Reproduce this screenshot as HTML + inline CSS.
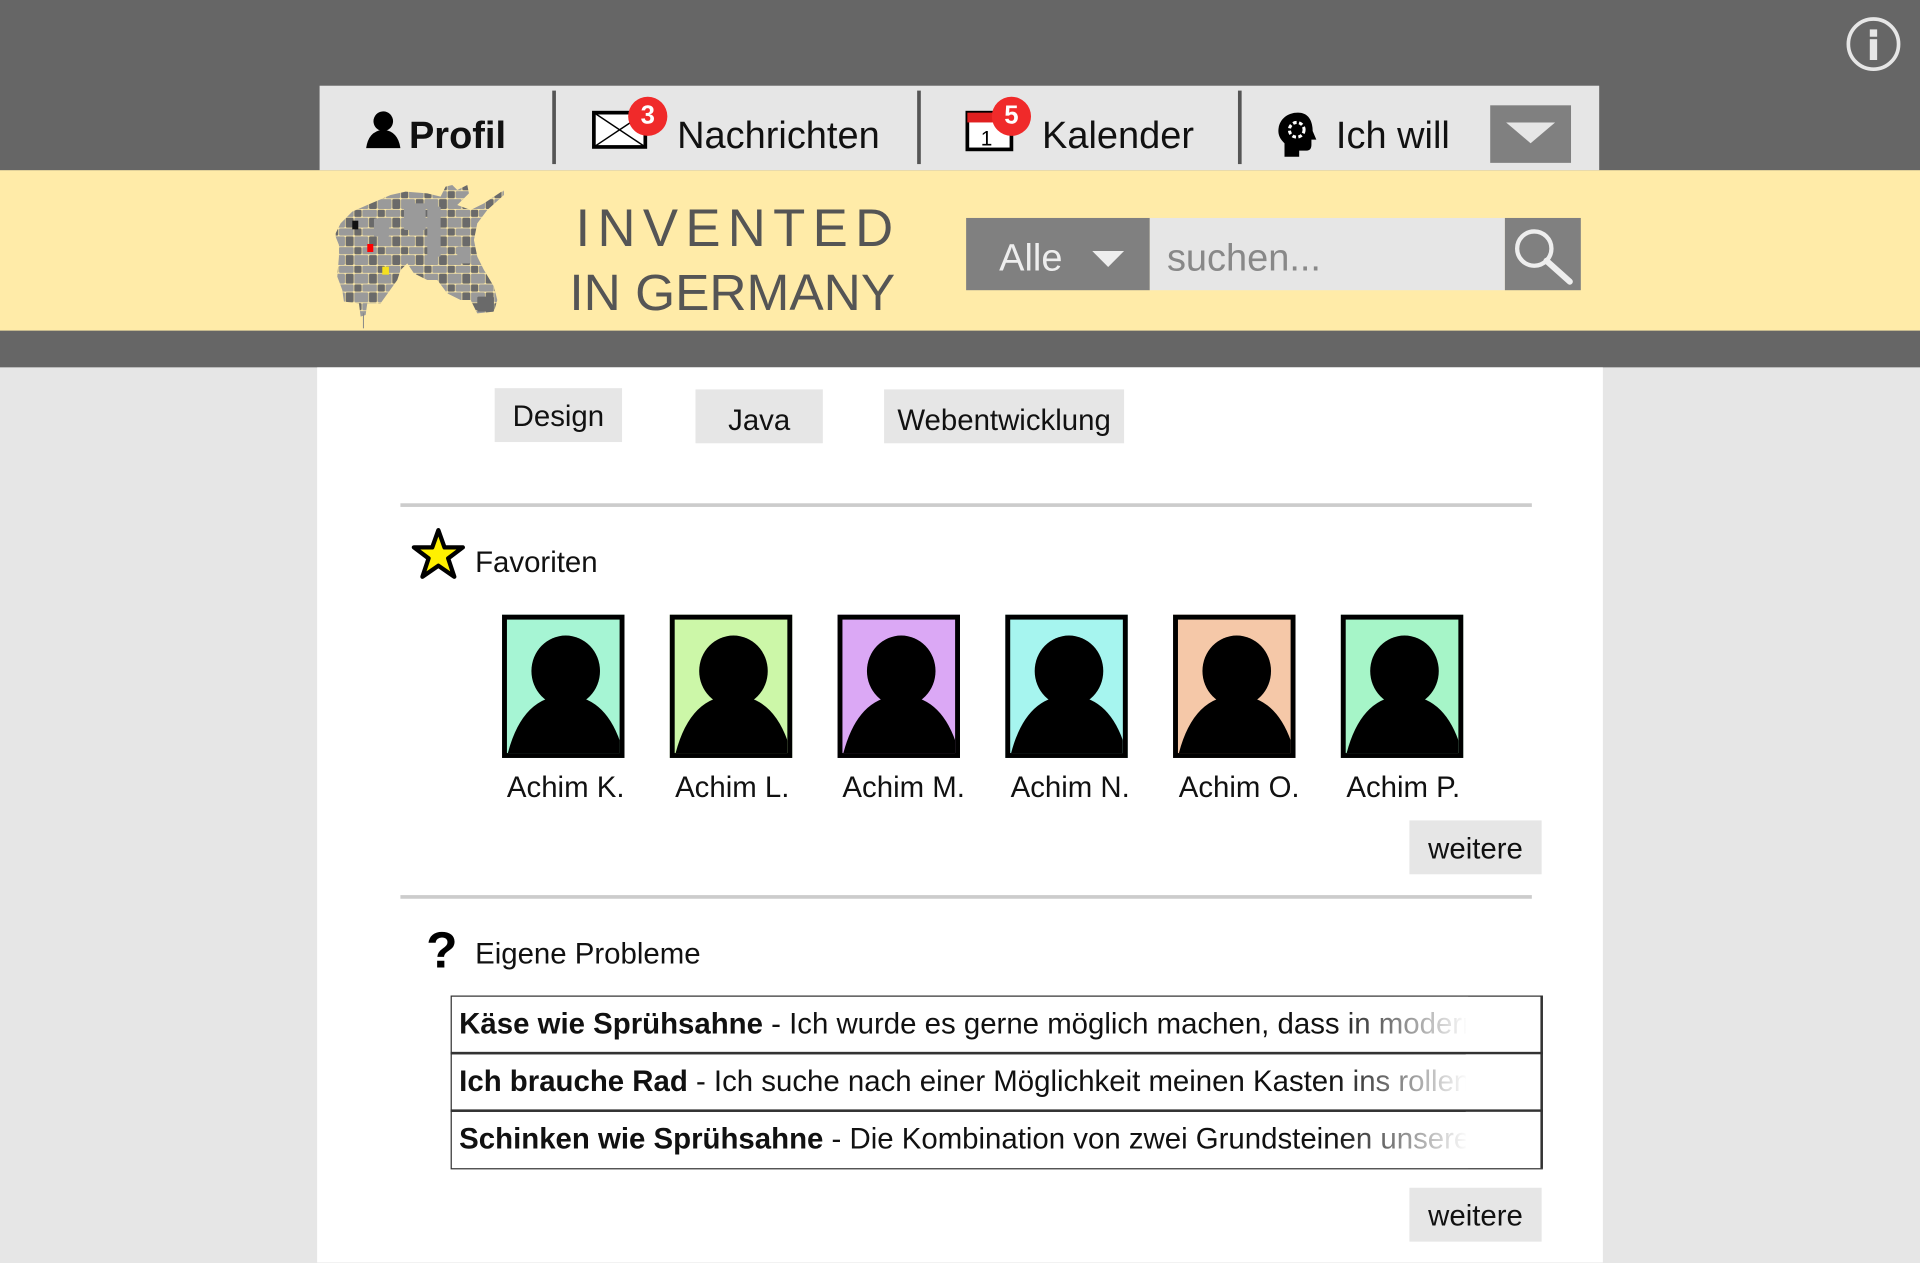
<!DOCTYPE html>
<html><head><meta charset="utf-8"><style>
*{margin:0;padding:0;box-sizing:border-box}
html,body{width:1920px;height:1263px;overflow:hidden;background:#e6e6e6;font-family:"Liberation Sans",sans-serif}
#w{position:absolute;left:0;top:0;width:1568px;height:1031px;transform:scale(1.22449);transform-origin:0 0;background:#e6e6e6}
.a{position:absolute}
.btn{position:absolute;background:#e6e6e6;font-size:24px;color:#111;display:flex;align-items:center;justify-content:center;padding-top:3px}
.sep{position:absolute;top:74px;width:3px;height:60px;background:#555}
.nav{position:absolute;font-size:31px;color:#111;top:93px}
.badge{position:absolute;width:32px;height:32px;border-radius:50%;background:#f02a2a;color:#fff;font-weight:bold;font-size:21px;display:flex;align-items:center;justify-content:center}
.ph{position:absolute;top:502px;width:100px;height:117px;border:4px solid #000;overflow:hidden}
.nm{position:absolute;top:630px;font-size:24px;color:#111;width:120px;text-align:center}
.row{position:absolute;left:368px;width:892px;height:48px;border:1.5px solid #333;font-size:24px;color:#111;padding-left:6px;line-height:46px;white-space:nowrap;overflow:hidden}
.row span.f{position:absolute;top:0;left:720px;width:110px;height:100%;background:linear-gradient(to right,rgba(255,255,255,0),#fff 100%)}
</style></head><body><div id="w">
<div class="a" style="left:0;top:0;width:1568px;height:300px;background:#666"></div>
<div class="a" style="left:0;top:139px;width:1568px;height:131px;background:#ffeba8"></div>
<div class="a" style="left:259px;top:300px;width:1050px;height:731px;background:#fff"></div>
<!-- info -->
<div class="a" style="left:1508px;top:14px;width:44px;height:44px;border:3px solid #e6e6e6;border-radius:50%"></div>
<div class="a" style="left:1527px;top:24px;width:6px;height:6px;background:#e6e6e6"></div>
<div class="a" style="left:1527px;top:32px;width:6px;height:17px;background:#e6e6e6"></div>
<!-- nav -->
<div class="a" style="left:261px;top:70px;width:1045px;height:69px;background:#e6e6e6"></div>
<svg class="a" style="left:298px;top:90px" width="30" height="32" viewBox="0 0 30 32"><circle cx="15" cy="9" r="8" fill="#000"/><path d="M1 31 Q3 17 15 16 Q27 17 29 31Z" fill="#000"/></svg>
<div class="nav" style="left:334px;font-weight:bold">Profil</div>
<div class="sep" style="left:451px"></div>
<svg class="a" style="left:483px;top:90px" width="46" height="32"><rect x="2" y="2" width="42" height="28" fill="#fff" stroke="#000" stroke-width="3"/><path d="M2 2L44 30M44 2L2 30" stroke="#000" stroke-width="1.2"/></svg>
<div class="badge" style="left:513px;top:79px">3</div>
<div class="nav" style="left:553px">Nachrichten</div>
<div class="sep" style="left:749px"></div>
<svg class="a" style="left:788px;top:88px" width="40" height="36"><rect x="2" y="4" width="36" height="30" fill="#fff" stroke="#000" stroke-width="3"/><rect x="2" y="4" width="36" height="8" fill="#e02020"/><text x="13" y="31" font-size="17" font-family="Liberation Sans">1</text></svg>
<div class="badge" style="left:810px;top:79px">5</div>
<div class="nav" style="left:851px">Kalender</div>
<div class="sep" style="left:1011px"></div>
<svg class="a" style="left:1042px;top:90px" width="36" height="40" viewBox="0 0 36 40"><path d="M18 2C8 2 2 9 2 17c0 5 3 8 5 10v11h12v-5h6c3 0 4-2 4-5v-4h4l-3-7C30 8 26 2 18 2Z" fill="#000"/><circle cx="17" cy="16" r="6" fill="none" stroke="#fff" stroke-width="2.5" stroke-dasharray="3 2"/></svg>
<div class="nav" style="left:1091px">Ich will</div>
<div class="a" style="left:1217px;top:86px;width:66px;height:47px;background:#808080"></div>
<div class="a" style="left:1230px;top:100px;width:0;height:0;border-left:20px solid transparent;border-right:20px solid transparent;border-top:17px solid #e6e6e6"></div>
<!-- logo -->
<svg class="a" style="left:270px;top:147px" width="147" height="122.5" viewBox="0 0 540 450">
<defs><pattern id="p" width="70" height="56" patternUnits="userSpaceOnUse">
<rect x="1" y="1" width="42" height="30" rx="4" fill="#9a9a9a"/><rect x="45" y="1" width="24" height="30" rx="4" fill="#6a6a6a"/><rect x="1" y="33" width="22" height="22" rx="4" fill="#6a6a6a"/><rect x="25" y="33" width="44" height="22" rx="4" fill="#9a9a9a"/></pattern>
<clipPath id="c"><path d="M15 160L30 130 65 95 110 75 180 45 225 35 290 40 330 50 345 20 365 15 380 30 410 15 415 40 380 75 420 90 460 70 520 30 520 45 470 90 440 130 430 180 440 230 460 270 490 320 500 360 490 395 440 400 420 360 390 360 350 340 320 300 290 300 250 280 230 250 210 270 200 300 150 370 110 370 105 405 90 410 85 370 40 365 35 330 20 290 25 230 25 195 15 170Z"/></clipPath></defs>
<g clip-path="url(#c)"><rect width="540" height="450" fill="url(#p)"/><rect x="220" y="70" width="65" height="80" rx="4" fill="#9a9a9a"/><rect x="130" y="115" width="45" height="55" rx="4" fill="#9a9a9a"/><rect x="290" y="80" width="40" height="150" rx="4" fill="#9a9a9a"/><rect x="380" y="200" width="40" height="50" rx="4" fill="#9a9a9a"/><rect x="440" y="350" width="50" height="45" rx="4" fill="#6a6a6a"/></g>
<rect x="65" y="122" width="18" height="26" fill="#111"/><rect x="110" y="192" width="18" height="24" fill="#f00"/><rect x="155" y="260" width="20" height="24" fill="#f5e020"/>
<rect x="97" y="400" width="3" height="45" fill="#888"/></svg>
<div class="a" style="left:470px;top:163px;width:260px;text-align:center;font-size:43px;color:#555;letter-spacing:6px">INVENTED</div>
<div class="a" style="left:456px;top:215px;width:284px;text-align:center;font-size:42px;color:#555">IN GERMANY</div>
<!-- search -->
<div class="a" style="left:789px;top:178px;width:150px;height:59px;background:#808080"></div>
<div class="a" style="left:816px;top:193px;font-size:31px;color:#eee">Alle</div>
<div class="a" style="left:892px;top:205px;width:0;height:0;border-left:13px solid transparent;border-right:13px solid transparent;border-top:13px solid #eee"></div>
<div class="a" style="left:939px;top:178px;width:290px;height:59px;background:#e6e6e6"></div>
<div class="a" style="left:953px;top:193px;font-size:31px;color:#888">suchen...</div>
<div class="a" style="left:1229px;top:178px;width:62px;height:59px;background:#808080"></div>
<svg class="a" style="left:1232px;top:182px" width="56" height="52"><circle cx="21" cy="21" r="14" fill="none" stroke="#eee" stroke-width="3.5"/><path d="M31 31L50 48" stroke="#eee" stroke-width="5" stroke-linecap="round"/></svg>
<!-- tags -->
<div class="btn" style="left:404px;top:317px;width:104px;height:44px">Design</div>
<div class="btn" style="left:568px;top:318px;width:104px;height:44px;padding-top:8px">Java</div>
<div class="btn" style="left:722px;top:318px;width:196px;height:44px;padding-top:7px">Webentwicklung</div>
<div class="a" style="left:327px;top:411px;width:924px;height:3px;background:#ccc"></div>
<svg class="a" style="left:335px;top:430px" width="46" height="44" viewBox="0 0 46 44"><path d="M23 3L28 17 43 17 31 26 36 41 23 32 10 41 15 26 3 17 18 17Z" fill="#fff000" stroke="#000" stroke-width="3.5" stroke-linejoin="round"/></svg>
<div class="a" style="left:388px;top:446px;font-size:24px;color:#111">Favoriten</div>
<!-- photos -->
<div class="ph" style="left:410px;background:#a6f5d4"><svg width="92" height="109"><ellipse cx="48" cy="42" rx="28" ry="29" fill="#000"/><path d="M0 112Q12 62 48 62Q84 62 96 112Z" fill="#000"/></svg></div>
<div class="ph" style="left:547px;background:#ccf7a8"><svg width="92" height="109"><ellipse cx="48" cy="42" rx="28" ry="29" fill="#000"/><path d="M0 112Q12 62 48 62Q84 62 96 112Z" fill="#000"/></svg></div>
<div class="ph" style="left:684px;background:#dba8f5"><svg width="92" height="109"><ellipse cx="48" cy="42" rx="28" ry="29" fill="#000"/><path d="M0 112Q12 62 48 62Q84 62 96 112Z" fill="#000"/></svg></div>
<div class="ph" style="left:821px;background:#a6f5ef"><svg width="92" height="109"><ellipse cx="48" cy="42" rx="28" ry="29" fill="#000"/><path d="M0 112Q12 62 48 62Q84 62 96 112Z" fill="#000"/></svg></div>
<div class="ph" style="left:958px;background:#f5c8a8"><svg width="92" height="109"><ellipse cx="48" cy="42" rx="28" ry="29" fill="#000"/><path d="M0 112Q12 62 48 62Q84 62 96 112Z" fill="#000"/></svg></div>
<div class="ph" style="left:1095px;background:#a6f5c8"><svg width="92" height="109"><ellipse cx="48" cy="42" rx="28" ry="29" fill="#000"/><path d="M0 112Q12 62 48 62Q84 62 96 112Z" fill="#000"/></svg></div>
<div class="nm" style="left:402px">Achim K.</div>
<div class="nm" style="left:538px">Achim L.</div>
<div class="nm" style="left:678px">Achim M.</div>
<div class="nm" style="left:814px">Achim N.</div>
<div class="nm" style="left:952px">Achim O.</div>
<div class="nm" style="left:1086px">Achim P.</div>
<div class="btn" style="left:1151px;top:670px;width:108px;height:44px">weitere</div>
<div class="a" style="left:327px;top:731px;width:924px;height:3px;background:#ccc"></div>
<div class="a" style="left:348px;top:752px;font-size:42px;font-weight:bold;color:#000">?</div>
<div class="a" style="left:388px;top:766px;font-size:24px;color:#111">Eigene Probleme</div>
<div class="row" style="top:813px"><b>Käse wie Sprühsahne</b> - Ich wurde es gerne möglich machen, dass in modernen<span class="f"></span></div>
<div class="row" style="top:860px"><b>Ich brauche Rad</b> - Ich suche nach einer Möglichkeit meinen Kasten ins rollen<span class="f"></span></div>
<div class="row" style="top:907px"><b>Schinken wie Sprühsahne</b> - Die Kombination von zwei Grundsteinen unserer<span class="f"></span></div>
<div class="a" style="left:1197px;top:815px;width:61px;height:137px;background:#fff"></div>
<div class="a" style="left:368px;top:859px;width:892px;height:1.5px;background:#333"></div>
<div class="a" style="left:368px;top:906px;width:892px;height:1.5px;background:#333"></div>
<div class="a" style="left:1258px;top:813px;width:1.5px;height:141px;background:#333"></div>
<div class="btn" style="left:1151px;top:970px;width:108px;height:44px">weitere</div>
</div></body></html>
